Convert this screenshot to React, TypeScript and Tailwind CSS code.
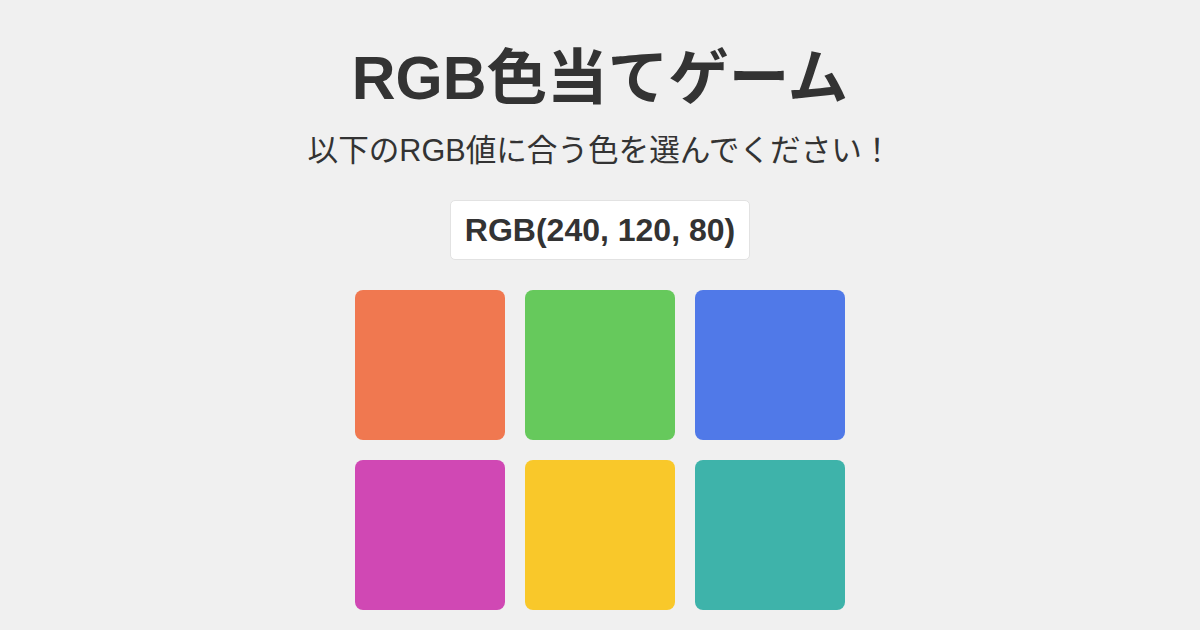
const COLORS = ['#f07850', '#66c95c', '#5079e8', '#d048b4', '#f9c82a', '#3eb3aa']

export default function App() {
  return (
    <div
      className="min-h-screen w-full bg-[#f0f0f0] text-[#333] flex flex-col items-center pt-[42px]"
      style={{ fontFamily: '"Liberation Sans", Arial, "Noto Sans CJK JP", sans-serif' }}
    >
      <h1 className="text-[60.6px] font-bold leading-[72px]">RGB色当てゲーム</h1>
      <p className="text-[30.6px] leading-[40px] mt-[16px]">以下のRGB値に合う色を選んでください！</p>
      <div className="mt-[30px] h-[60px] px-[14px] flex items-center bg-white border border-[#e2e2e2] rounded-[5px] text-[32px] font-bold">
        RGB(240, 120, 80)
      </div>
      <div className="mt-[30px] grid grid-cols-3 gap-5">
        {COLORS.map((c) => (
          <button key={c} className="w-[150px] h-[150px] rounded-lg" style={{ backgroundColor: c }} />
        ))}
      </div>
    </div>
  )
}
